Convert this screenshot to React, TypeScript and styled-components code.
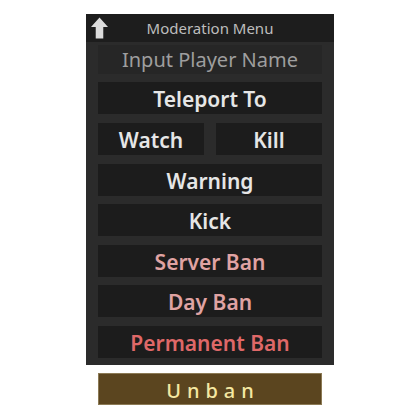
import * as React from "react";
import styled, { createGlobalStyle } from "styled-components";

const GlobalStyle = createGlobalStyle`
  html, body {
    margin: 0;
    padding: 0;
    background: #ffffff;
  }
  body {
    font-family: "Noto Sans", "Open Sans", sans-serif;
  }
`;

interface ActionType {
  label: string;
  tone?: "plain" | "soft" | "danger";
}

const actions: ActionType[] = [
  { label: "Warning" },
  { label: "Kick" },
  { label: "Server Ban", tone: "soft" },
  { label: "Day Ban", tone: "soft" },
  { label: "Permanent Ban", tone: "danger" },
];

const toneColors = {
  plain: "#e6e6e6",
  soft: "#e0a3a3",
  danger: "#df6868",
};

export default function App() {
  return (
    <>
      <GlobalStyle />
      <Page>
        <Panel>
          <Header>
            <BackArrow viewBox="0 0 18 22">
              <path d="M9 0 L18 10 L13 10 L13 22 L5 22 L5 10 L0 10 Z" fill="#dcdcdc" />
            </BackArrow>
            <HeaderTitle>Moderation Menu</HeaderTitle>
          </Header>
          <Body>
            <NameInput placeholder="Input Player Name" />
            <ActionButton>Teleport To</ActionButton>
            <SplitRow>
              <ActionButton>Watch</ActionButton>
              <ActionButton>Kill</ActionButton>
            </SplitRow>
            {actions.map((action) => (
              <ActionButton key={action.label} $tone={action.tone || "plain"}>
                {action.label}
              </ActionButton>
            ))}
          </Body>
        </Panel>
        <UnbanButton>Unban</UnbanButton>
      </Page>
    </>
  );
}

const Page = styled.div`
  display: flex;
  flex-direction: column;
  align-items: flex-start;
  padding: 14px 0 0 86px;
`;

const Panel = styled.div`
  width: 248px;
  height: 351px;
  background: #2b2b2b;
  display: flex;
  flex-direction: column;
`;

const Header = styled.div`
  position: relative;
  height: 28px;
  background: #1d1d1d;
  display: flex;
  align-items: center;
  justify-content: center;
`;

const BackArrow = styled.svg`
  position: absolute;
  left: 5px;
  top: 3px;
  width: 17px;
  height: 22px;
`;

const HeaderTitle = styled.div`
  font-size: 15px;
  color: #bdbdbd;
`;

const Body = styled.div`
  display: grid;
  grid-template-columns: minmax(0, 1fr);
  grid-template-rows: 29px repeat(7, 32px);
  row-gap: 8.6px;
  padding: 3px 12px 7px;
`;

const NameInput = styled.input`
  width: 100%;
  min-width: 0;
  height: 29px;
  box-sizing: border-box;
  border: none;
  outline: none;
  background: #262626;
  font-family: "Noto Sans", "Open Sans", sans-serif;
  font-size: 20px;
  text-align: center;
  color: #9e9e9e;
  padding: 0;

  &::placeholder {
    color: #9e9e9e;
  }
`;

const SplitRow = styled.div`
  display: grid;
  grid-template-columns: minmax(0, 1fr) minmax(0, 1fr);
  column-gap: 12px;
`;

const ActionButton = styled.button<{ $tone?: "plain" | "soft" | "danger" }>`
  width: 100%;
  min-width: 0;
  height: 32px;
  border: none;
  padding: 2px 0 0;
  background: #1c1c1c;
  font-family: "Noto Sans", "Open Sans", sans-serif;
  font-size: 21px;
  font-weight: 600;
  white-space: nowrap;
  color: ${(p) => toneColors[p.$tone || "plain"]};
  display: flex;
  align-items: center;
  justify-content: center;
`;

const UnbanButton = styled.button`
  width: 224px;
  height: 32px;
  margin: 8px 0 0 12px;
  box-sizing: border-box;
  border: 1px solid #8c7a55;
  background: #5b451f;
  font-family: "Noto Sans", "Open Sans", sans-serif;
  font-size: 20px;
  font-weight: 500;
  letter-spacing: 6px;
  padding: 3px 0 0 6px;
  color: #f4e8a2;
  display: flex;
  align-items: center;
  justify-content: center;
`;
